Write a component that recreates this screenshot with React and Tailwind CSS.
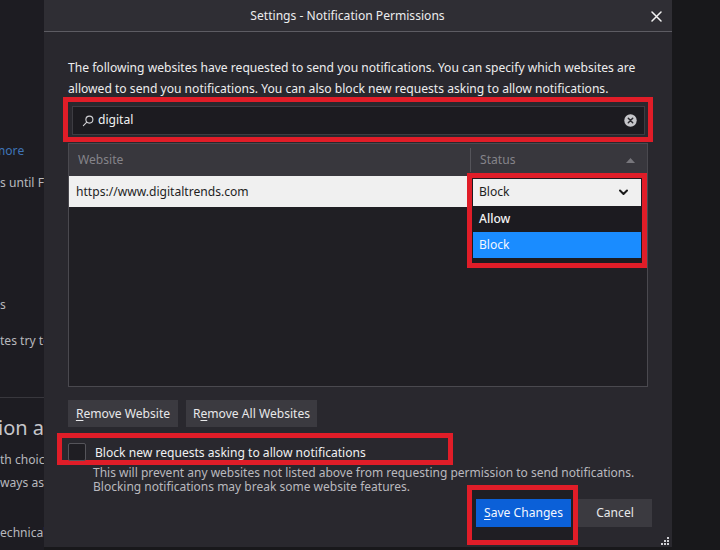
import React from "react";

const font = { fontFamily: "'Noto Sans', 'Open Sans', sans-serif" };

function SearchIcon() {
  return (
    <svg width="12" height="12" viewBox="0 0 13 13" fill="none" stroke="#d0d0d4" strokeWidth="1.2">
      <circle cx="8" cy="5" r="3.8" />
      <path d="M5.2 7.8 L1.5 11.5" strokeLinecap="round" />
    </svg>
  );
}

function ClearIcon() {
  return (
    <svg width="13" height="13" viewBox="0 0 13 13">
      <circle cx="6.5" cy="6.5" r="6.2" fill="#c6c6ca" />
      <path d="M4.3 4.3 L8.7 8.7 M8.7 4.3 L4.3 8.7" stroke="#2a292f" strokeWidth="1.5" strokeLinecap="round" />
    </svg>
  );
}

function CloseIcon() {
  return (
    <svg width="11" height="11" viewBox="0 0 11 11">
      <path d="M1 1 L10 10 M10 1 L1 10" stroke="#f2f2f2" strokeWidth="1.5" strokeLinecap="round" />
    </svg>
  );
}

function Chevron() {
  return (
    <svg width="9" height="7" viewBox="0 0 9 7">
      <path d="M1 1.5 L4.5 5 L8 1.5" stroke="#1a1a1a" strokeWidth="2" fill="none" strokeLinecap="round" strokeLinejoin="round" />
    </svg>
  );
}

function Grip() {
  return (
    <svg width="8" height="8" viewBox="0 0 8 8" fill="#cfcfd3">
      <rect x="6" y="0" width="2" height="2" />
      <rect x="3" y="3" width="2" height="2" />
      <rect x="6" y="3" width="2" height="2" />
      <rect x="0" y="6" width="2" height="2" />
      <rect x="3" y="6" width="2" height="2" />
      <rect x="6" y="6" width="2" height="2" />
    </svg>
  );
}

export default function App() {
  return (
    <div className="w-[720px] h-[550px] flex bg-[#18181b] overflow-hidden" style={font}>
      {/* left background page */}
      <div className="w-[44px] h-full shrink-0 bg-[#1d1c22] overflow-hidden flex flex-col text-[12.1px] text-[#b8b8bd] whitespace-nowrap">
        <div className="mt-[142px] h-[18px] leading-[18px] text-[#3f74b8] -ml-[6px]">more</div>
        <div className="mt-[14px] h-[18px] leading-[18px]">s until Firefox</div>
        <div className="mt-[104px] h-[18px] leading-[18px]">s</div>
        <div className="mt-[18px] h-[18px] leading-[18px]">tes try to</div>
        <div className="mt-[47px] h-px bg-[#38373d]"></div>
        <div className="mt-[18px] h-[24px] leading-[24px] text-[20px] text-[#c6c6ca] -ml-[2px]">ion and</div>
        <div className="mt-[11px] h-[18px] leading-[18px]">th choice</div>
        <div className="mt-[5px] h-[18px] leading-[18px]">ways ask</div>
        <div className="mt-[32px] h-[18px] leading-[18px]">echnical</div>
      </div>

      {/* dialog */}
      <div className="relative w-[628px] h-[547px] shrink-0 bg-[#29282e] flex flex-col">
        <div className="h-[32px] shrink-0 bg-[#2f2e34] border-b border-[#5d5c63] flex items-center pt-[2px]">
          <div className="flex-1 flex justify-center text-[12.1px] text-[#ececee]">
            Settings - Notification Permissions
          </div>
          <div className="pr-[10px]">
            <CloseIcon />
          </div>
        </div>

        <div className="flex flex-col px-[24px] pt-[25px]">
          <p className="text-[12.1px] leading-[21px] text-[#eeeeef] whitespace-nowrap">
            The following websites have requested to send you notifications. You can specify which websites are
            <br />
            allowed to send you notifications. You can also block new requests asking to allow notifications.
          </p>

          {/* search with annotation */}
          <div className="-mt-[2px] -ml-[5px] w-[590px] h-[45px] border-[5px] border-[#e01d28] pl-[4px] pr-[3px] pt-[4px] pb-[2px]">
            <div className="h-full bg-[#1c1b20] border border-[#3d3c42] flex items-center pl-[9px] pr-[7px] gap-[4px]">
              <SearchIcon />
              <span className="flex-1 text-[12.1px] text-[#f2f2f2]">digital</span>
              <ClearIcon />
            </div>
          </div>

          {/* table */}
          <div className="relative mt-[1px] h-[244px] bg-[#201f24] border border-[#4a494f] flex flex-col">
            <div className="h-[32px] shrink-0 bg-[#38373d] flex items-center text-[12.1px] text-[#85848a]">
              <div className="w-[401px] pl-[9px]">Website</div>
              <div className="h-[24px] w-px bg-[#55545a]"></div>
              <div className="flex-1 pl-[9px]">Status</div>
              <svg width="9" height="5" viewBox="0 0 9 5" className="mr-[12px]">
                <path d="M0 5 L4.5 0 L9 5 Z" fill="#77767c" />
              </svg>
            </div>
            <div className="h-[31px] shrink-0 bg-[#f0f0f0] flex items-center pl-[7px] pt-[1px] text-[12.1px] text-[#1e1e1e]">
              https://www.digitaltrends.com
            </div>

            {/* dropdown with annotation */}
            <div className="absolute left-[398px] top-[29px] w-[180px] h-[95px] border-[5px] border-[#e01d28] p-[1px] flex flex-col bg-[#1c1b20]">
              <div className="h-[27px] shrink-0 bg-[#f0f0f0] flex items-center justify-between pl-[6px] pr-[13px] text-[12.1px] text-[#1e1e1e]">
                <span>Block</span>
                <Chevron />
              </div>
              <div className="h-[26px] shrink-0 flex items-center pl-[6px] text-[12.1px] font-medium text-[#f2f2f2] bg-[#1c1b20]">
                Allow
              </div>
              <div className="h-[26px] shrink-0 flex items-center pl-[6px] text-[12.1px] text-[#f2f6ff] bg-[#1a8cff]">
                Block
              </div>
            </div>
          </div>

          {/* buttons */}
          <div className="mt-[13px] flex gap-[8px]">
            <button className="h-[27px] w-[110px] bg-[#3b3a40] text-[12.1px] text-[#e8e8ea] pt-[1px]">
              <span className="underline underline-offset-2">R</span>emove Website
            </button>
            <button className="h-[27px] w-[131px] bg-[#3b3a40] text-[12.1px] text-[#e8e8ea] pt-[1px]">
              R<span className="underline underline-offset-2">e</span>move All Websites
            </button>
          </div>

          {/* checkbox with annotation */}
          <div className="mt-[6px] -ml-[11px] w-[396px] h-[32px] border-[5px] border-[#e01d28] flex items-start pt-[5px] pl-[6px] gap-[9px]">
            <div className="w-[18px] h-[18px] shrink-0 border border-[#55545a] bg-[#1f1e23] rounded-[2px]"></div>
            <span className="text-[12.1px] leading-[18px] text-[#f0f0f2] pt-[1px]">Block new requests asking to allow notifications</span>
          </div>

          <div className="mt-[1px] pl-[25px] text-[12px] leading-[14px] text-[#b9b9be]">
            This will prevent any websites not listed above from requesting permission to send notifications.
            <br />
            Blocking notifications may break some website features.
          </div>

          {/* bottom row */}
          <div className="-mt-[9px] -mr-[4px] flex justify-end items-start">
            <div className="w-[111px] h-[60px] border-[5px] border-[#e01d28] pl-[4px] pt-[9px] bg-[#1f1e23]">
              <button className="h-[28px] w-[95px] bg-[#0b60d8] text-[12.1px] text-[#f4f7ff] pt-[1px]">
                <span className="underline underline-offset-2">S</span>ave Changes
              </button>
            </div>
            <button className="mt-[14px] h-[28px] w-[74px] bg-[#3b3a40] text-[12.1px] text-[#e8e8ea] pt-[1px]">
              Cancel
            </button>
          </div>
        </div>

        <div className="absolute right-[3px] bottom-[2px]">
          <Grip />
        </div>
      </div>

      <div className="flex-1 h-full bg-[#18181b]"></div>
    </div>
  );
}
